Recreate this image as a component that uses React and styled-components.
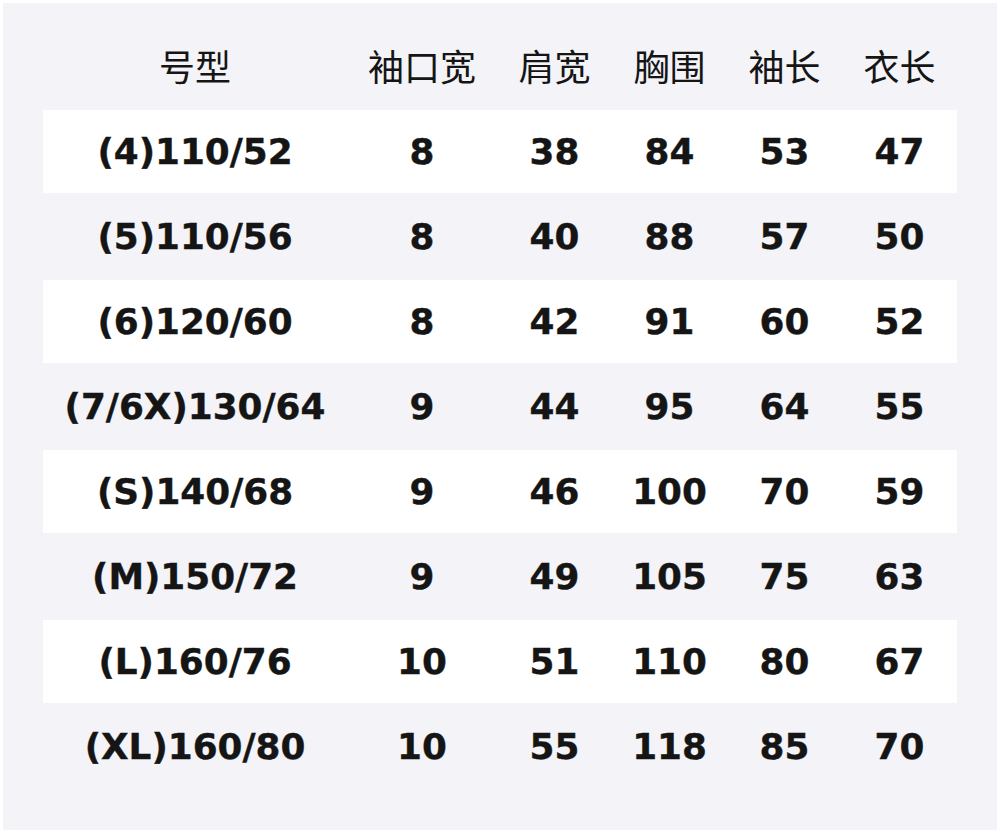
import React from 'react';
import styled, { createGlobalStyle } from 'styled-components';

const columns = ['号型', '袖口宽', '肩宽', '胸围', '袖长', '衣长'];
const widths = [304, 150, 115, 115, 115, 115];

const sizes = [
  ['(4)110/52', '8', '38', '84', '53', '47'],
  ['(5)110/56', '8', '40', '88', '57', '50'],
  ['(6)120/60', '8', '42', '91', '60', '52'],
  ['(7/6X)130/64', '9', '44', '95', '64', '55'],
  ['(S)140/68', '9', '46', '100', '70', '59'],
  ['(M)150/72', '9', '49', '105', '75', '63'],
  ['(L)160/76', '10', '51', '110', '80', '67'],
  ['(XL)160/80', '10', '55', '118', '85', '70'],
];

const SizeChart = () => {
  return (
    <>
      <GlobalStyle />
      <Panel>
        <Table>
          <colgroup>
            {widths.map((w, i) => (
              <col key={i} style={{ width: w }} />
            ))}
          </colgroup>
          <thead>
            <tr>
              {columns.map((c) => (
                <HeadCell key={c}>{c}</HeadCell>
              ))}
            </tr>
          </thead>
          <tbody>
            {sizes.map((row, index) => (
              <Row key={row[0]} striped={index % 2 === 0}>
                {row.map((value, i) => (
                  <Cell key={i}>{value}</Cell>
                ))}
              </Row>
            ))}
          </tbody>
        </Table>
      </Panel>
    </>
  );
};

const GlobalStyle = createGlobalStyle`
  html, body {
    margin: 0;
    padding: 0;
    background: #ffffff;
  }
`;

const Panel = styled.div`
  margin: 3px;
  height: 827px;
  box-sizing: border-box;
  background: #f3f3f8;
  padding: 20px 40px 40px;
`;

const Table = styled.table`
  width: 914px;
  table-layout: fixed;
  border-collapse: separate;
  border-spacing: 0 2px;
  color: #151515;
`;

const HeadCell = styled.th`
  height: 83px;
  padding: 0 0 4px;
  box-sizing: border-box;
  text-align: center;
  font-family: "Noto Sans CJK SC", "Noto Sans", sans-serif;
  font-weight: 400;
  font-size: 36px;
`;

const Row = styled.tr`
  background: ${({ striped }) => (striped ? '#ffffff' : 'transparent')};
`;

const Cell = styled.td`
  height: 83px;
  padding: 0;
  text-align: center;
  font-family: "DejaVu Sans", "Noto Sans CJK SC", sans-serif;
  font-weight: 700;
  font-size: 35.8px;
  -webkit-text-stroke: 0.4px #151515;
`;

export default SizeChart;
